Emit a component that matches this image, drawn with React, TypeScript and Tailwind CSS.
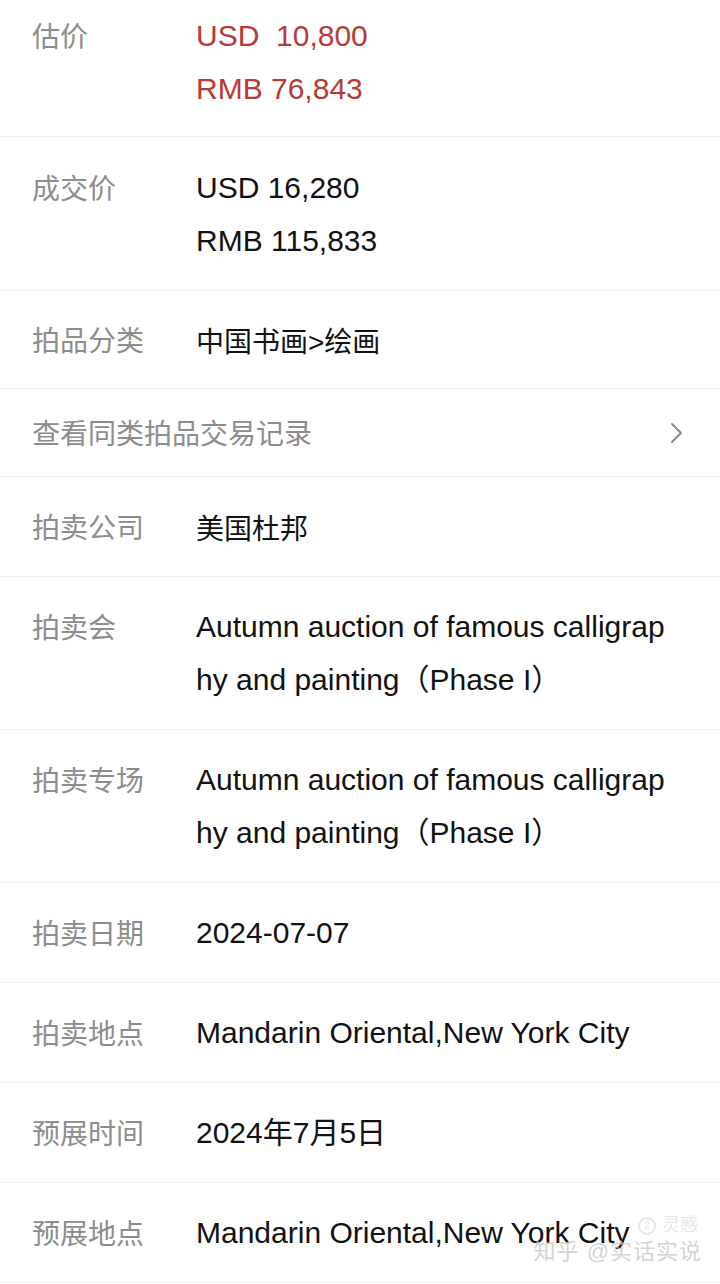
import React from 'react';

const font = { fontFamily: '"Liberation Sans", "Noto Sans CJK SC", sans-serif' };

type Row = {
  label: string;
  lines: string[];
  red?: boolean;
  cjk?: boolean;
};

const afterLink: Row[] = [
  { label: '拍卖公司', lines: ['美国杜邦'], cjk: true },
  { label: '拍卖会', lines: ['Autumn auction of famous calligraphy and painting（Phase I）'] },
  { label: '拍卖专场', lines: ['Autumn auction of famous calligraphy and painting（Phase I）'] },
  { label: '拍卖日期', lines: ['2024-07-07'] },
  { label: '拍卖地点', lines: ['Mandarin Oriental,New York City'] },
  { label: '预展时间', lines: ['2024年7月5日'] },
  { label: '预展地点', lines: ['Mandarin Oriental,New York City'] },
];

const InfoRow = ({ row, className }: { row: Row; className: string }) => (
  <div className={`flex border-b border-[#efefef] pl-[32px] ${className}`}>
    <div className="w-[164px] shrink-0 translate-y-[2px] text-[28px] text-[#8c8c8c] leading-[53px]">{row.label}</div>
    <div
      className={`w-[478px] break-all leading-[53px] ${row.cjk ? 'text-[28px] translate-y-[3px]' : 'text-[30px]'} ${
        row.red ? 'text-[#b83a34]' : 'text-[#111111]'
      }`}
    >
      {row.lines.map((l) => (
        <div key={l}>{l}</div>
      ))}
    </div>
  </div>
);

export default function App() {
  return (
    <div className="relative w-[720px] min-h-[1284px] bg-white text-[30px] overflow-hidden" style={font}>
      <InfoRow row={{ label: '估价', lines: ['USD\u00a0\u00a010,800', 'RMB 76,843'], red: true }} className="pt-[9px] pb-[21px]" />
      <InfoRow row={{ label: '成交价', lines: ['USD 16,280', 'RMB 115,833'] }} className="pt-[24px] pb-[23px]" />
      <InfoRow row={{ label: '拍品分类', lines: ['中国书画>绘画'], cjk: true }} className="pt-[22px] pb-[22px]" />

      {/* link row */}
      <div className="flex items-center justify-between border-b border-[#efefef] pl-[32px] pr-[36px] py-[17px]">
        <span className="translate-y-[2px] text-[28px] text-[#8c8c8c] leading-[53px]">查看同类拍品交易记录</span>
        <svg width="14" height="22" viewBox="0 0 14 22" fill="none">
          <path d="M2 2 L11 11 L2 20" stroke="#8a8a8a" strokeWidth="2" strokeLinecap="round" strokeLinejoin="round" />
        </svg>
      </div>

      {afterLink.map((r) => (
        <InfoRow key={r.label} row={r} className="py-[23px]" />
      ))}

      {/* watermark */}
      <div className="absolute right-[22px] top-[1212px] flex items-center gap-[6px] text-[18px] text-[#e6e6e6]">
        <span className="flex h-[18px] w-[18px] items-center justify-center rounded-full border-2 border-[#e6e6e6] text-[10px]">2</span>
        <span>灵感</span>
      </div>
      <div className="absolute right-[18px] top-[1238px] text-[22px] leading-[28px] text-[#c8c8c8]/80 tracking-[1px]">
        知乎 @实话实说
      </div>
    </div>
  );
}
